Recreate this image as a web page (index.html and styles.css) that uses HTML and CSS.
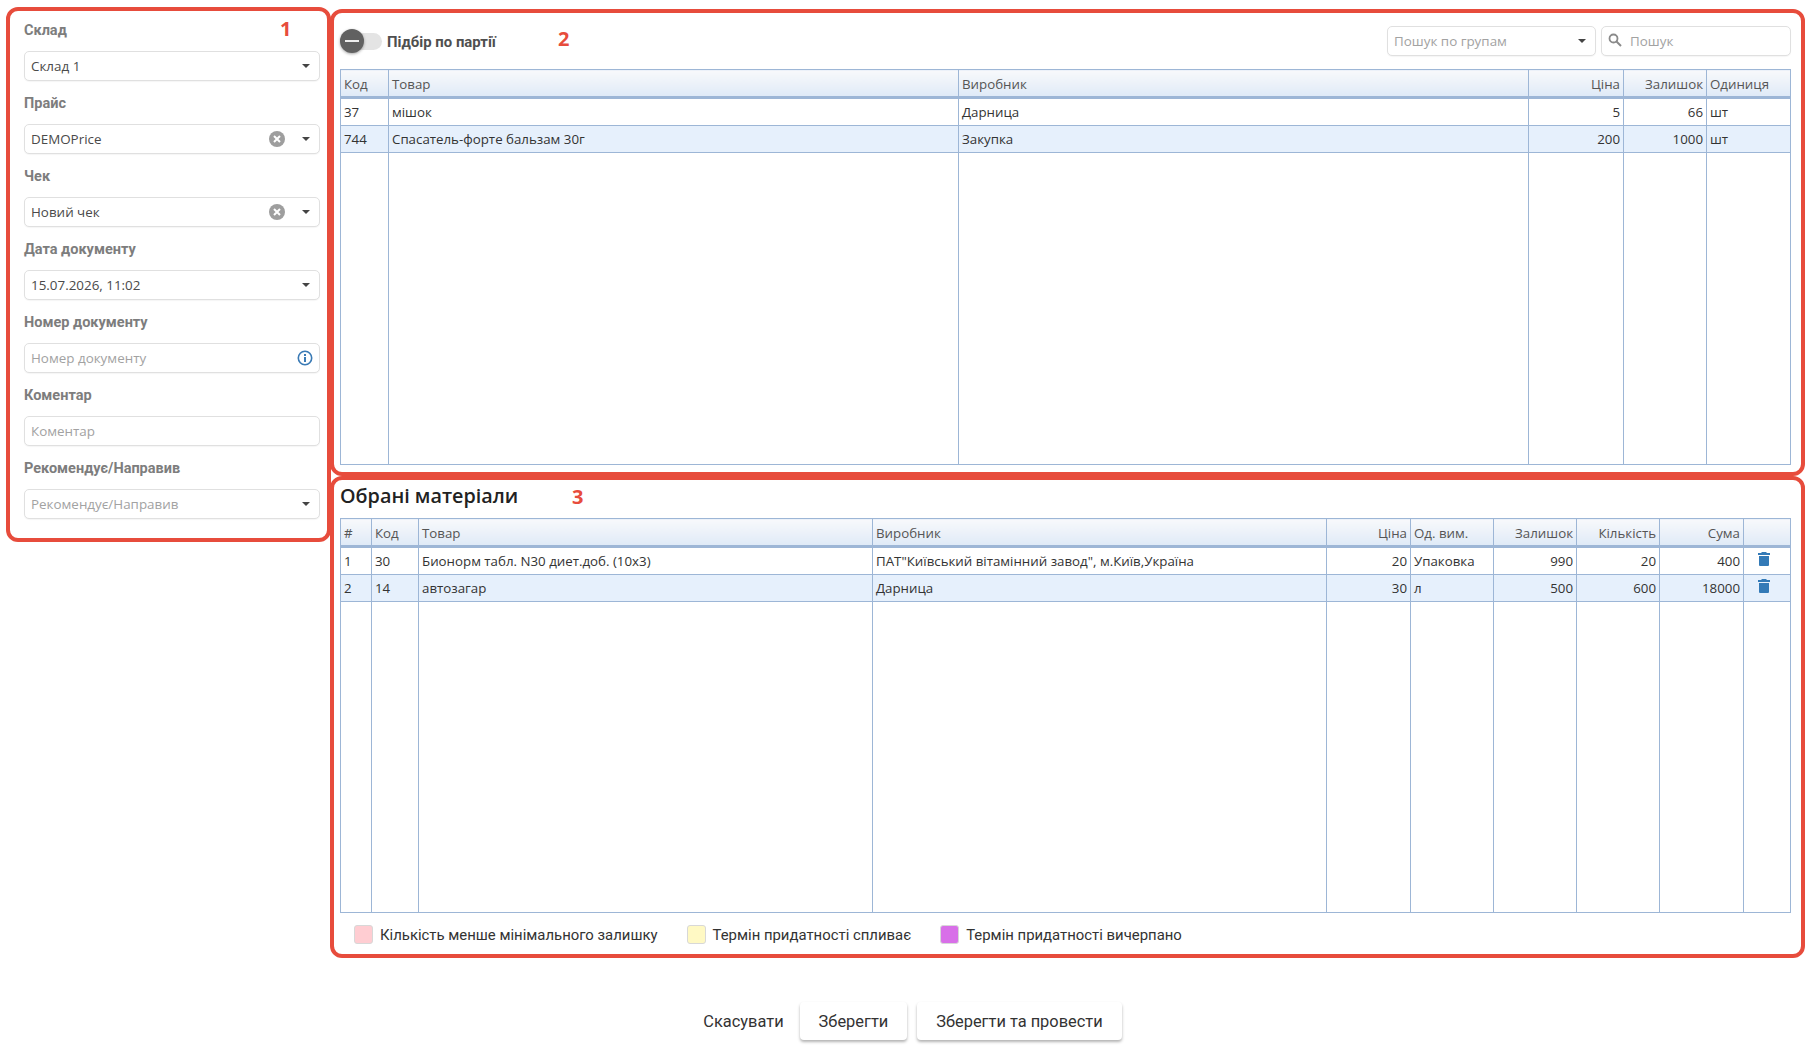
FILE: index.html
```html
<!DOCTYPE html>
<html lang="uk">
<head>
  <meta charset="UTF-8" />
  <title>Підбір матеріалів</title>
  <link rel="stylesheet" href="styles.css">
</head>
<body>
  <svg class="sprite" width="0" height="0">
    <symbol id="caret" viewBox="0 0 10 5"><path d="M0 0h10L5 5z"/></symbol>
    <symbol id="clear" viewBox="0 0 16 16"><circle cx="8" cy="8" r="8" fill="#9e9e9e"/><path d="M5 5l6 6M11 5l-6 6" stroke="#fff" stroke-width="2"/></symbol>
    <symbol id="info" viewBox="0 0 16 16"><circle cx="8" cy="8" r="6.7" fill="none" stroke="#3a7ab5" stroke-width="1.6"/><rect x="7" y="7" width="2" height="5" fill="#3a7ab5"/><rect x="7" y="4" width="2" height="2" fill="#3a7ab5"/></symbol>
    <symbol id="trash" viewBox="0 0 12 14"><path d="M4 0h4l1 1h3v2H0V1h3zM1 4h10v9a1 1 0 0 1-1 1H2a1 1 0 0 1-1-1z" fill="#337ab7"/></symbol>
  </svg>

  <div class="layout">
    <aside class="panel side">
      <span class="mark mark-1">1</span>
      <div class="field">
        <label>Склад</label>
        <div class="input"><span class="val">Склад 1</span><svg class="caret"><use href="#caret"/></svg></div>
      </div>
      <div class="field">
        <label>Прайс</label>
        <div class="input"><span class="val">DEMOPrice</span><svg class="clear"><use href="#clear"/></svg><svg class="caret"><use href="#caret"/></svg></div>
      </div>
      <div class="field">
        <label>Чек</label>
        <div class="input"><span class="val">Новий чек</span><svg class="clear"><use href="#clear"/></svg><svg class="caret"><use href="#caret"/></svg></div>
      </div>
      <div class="field">
        <label>Дата документу</label>
        <div class="input"><span class="val">15.07.2026, 11:02</span><svg class="caret"><use href="#caret"/></svg></div>
      </div>
      <div class="field">
        <label>Номер документу</label>
        <div class="input"><span class="val hint">Номер документу</span><svg class="info"><use href="#info"/></svg></div>
      </div>
      <div class="field">
        <label>Коментар</label>
        <div class="input"><span class="val hint">Коментар</span></div>
      </div>
      <div class="field">
        <label>Рекомендує/Направив</label>
        <div class="input"><span class="val hint">Рекомендує/Направив</span><svg class="caret"><use href="#caret"/></svg></div>
      </div>
    </aside>

    <main class="content">
      <section class="panel goods">
        <span class="mark mark-2">2</span>
        <div class="toolbar">
          <div class="toggle"><span class="track"></span><span class="thumb"></span></div>
          <span class="toggle-label">Підбір по партії</span>
          <div class="input group-search"><span class="val hint">Пошук по групам</span><svg class="caret"><use href="#caret"/></svg></div>
          <div class="input text-search">
            <svg class="lens" viewBox="0 0 14 14"><circle cx="5.5" cy="5.5" r="4" fill="none" stroke="#8a8a8a" stroke-width="1.8"/><path d="M8.5 8.5l4.5 4.5" stroke="#8a8a8a" stroke-width="2"/></svg>
            <span class="val hint">Пошук</span>
          </div>
        </div>
        <table class="grid grid-goods">
          <colgroup><col class="w48"><col class="w570"><col class="w570"><col class="w95"><col class="w83"><col class="w84"></colgroup>
          <thead>
            <tr><th>Код</th><th>Товар</th><th>Виробник</th><th class="num">Ціна</th><th class="num">Залишок</th><th>Одиниця</th></tr>
          </thead>
          <tbody>
            <tr><td>37</td><td>мішок</td><td>Дарница</td><td class="num">5</td><td class="num">66</td><td>шт</td></tr>
            <tr class="alt"><td>744</td><td>Спасатель-форте бальзам 30г</td><td>Закупка</td><td class="num">200</td><td class="num">1000</td><td>шт</td></tr>
            <tr class="filler"><td></td><td></td><td></td><td></td><td></td><td></td></tr>
          </tbody>
        </table>
      </section>

      <section class="panel picked">
        <span class="mark mark-3">3</span>
        <h2>Обрані матеріали</h2>
        <table class="grid grid-picked">
          <colgroup><col class="w31"><col class="w47"><col class="w454"><col class="w454"><col class="w84"><col class="w83"><col class="w83"><col class="w83"><col class="w84"><col class="w47"></colgroup>
          <thead>
            <tr><th>#</th><th>Код</th><th>Товар</th><th>Виробник</th><th class="num">Ціна</th><th>Од. вим.</th><th class="num">Залишок</th><th class="num">Кількість</th><th class="num">Сума</th><th></th></tr>
          </thead>
          <tbody>
            <tr><td>1</td><td>30</td><td>Бионорм табл. N30 диет.доб. (10х3)</td><td>ПАТ"Київський вітамінний завод", м.Київ,Україна</td><td class="num">20</td><td>Упаковка</td><td class="num">990</td><td class="num">20</td><td class="num">400</td><td class="act"><svg class="trash"><use href="#trash"/></svg></td></tr>
            <tr class="alt"><td>2</td><td>14</td><td>автозагар</td><td>Дарница</td><td class="num">30</td><td>л</td><td class="num">500</td><td class="num">600</td><td class="num">18000</td><td class="act"><svg class="trash"><use href="#trash"/></svg></td></tr>
            <tr class="filler"><td></td><td></td><td></td><td></td><td></td><td></td><td></td><td></td><td></td><td></td></tr>
          </tbody>
        </table>
        <div class="legend">
          <span class="swatch low"></span><span class="legend-text">Кількість менше мінімального залишку</span>
          <span class="swatch soon"></span><span class="legend-text">Термін придатності спливає</span>
          <span class="swatch expired"></span><span class="legend-text">Термін придатності вичерпано</span>
        </div>
      </section>
    </main>
  </div>

  <div class="footer">
    <button class="btn flat">Скасувати</button>
    <button class="btn">Зберегти</button>
    <button class="btn">Зберегти та провести</button>
  </div>
</body>
</html>
```

FILE: styles.css
```css
html, body {
  margin: 0;
  background: #fff;
}

body {
  height: 1049px;
  overflow: hidden;
  font-family: 'Open Sans', sans-serif;
  font-size: 13px;
  color: #333;
}

.sprite {
  display: block;
  height: 0;
}

.layout {
  display: flex;
  align-items: flex-start;
  padding: 7px 9px 0 6px;
}

.panel {
  position: relative;
  box-sizing: border-box;
  border: 4px solid #e74c3c;
  border-radius: 12px;
  background: #fff;
}

.mark {
  position: absolute;
  color: #e74c3c;
  font-family: 'Open Sans', sans-serif;
  font-size: 20px;
  font-weight: 700;
  line-height: 24px;
}

.mark-1 { left: 270px; top: 6px; }
.mark-2 { left: 224px; top: 14px; }
.mark-3 { left: 238px; top: 5px; }

.side {
  width: 325px;
  flex: none;
  margin-right: -1px;
  padding: 10px 7px 19px 14px;
}

.field {
  margin-bottom: 13px;
}

.field:last-child {
  margin-bottom: 0;
}

label {
  display: block;
  height: 20px;
  margin-bottom: 10px;
  font-family: Roboto, sans-serif;
  font-size: 14.5px;
  font-weight: 700;
  line-height: 20px;
  color: #7d7d7d;
}

.input {
  display: flex;
  align-items: center;
  box-sizing: border-box;
  height: 30px;
  padding: 0 9px 0 6px;
  border: 1px solid #e0e0e0;
  border-radius: 5px;
  background: #fff;
  box-shadow: 0 1px 1px rgba(0,0,0,0.04);
}

.val {
  flex: 1;
  font-size: 13.4px;
  color: #4a4a4a;
  white-space: nowrap;
}

.val.hint {
  color: #a2a2a2;
}

.caret {
  width: 8px;
  height: 4px;
  margin-left: 17px;
  fill: #444;
}

.clear {
  width: 16px;
  height: 16px;
}

.info {
  width: 16px;
  height: 16px;
  margin-right: -3px;
}

.content {
  flex: 1;
  display: flex;
  flex-direction: column;
  margin-top: 2px;
}

.goods {
  padding: 13px 10px 7px 6px;
}

.toolbar {
  display: flex;
  align-items: center;
  height: 30px;
  margin-bottom: 13px;
}

.toggle {
  position: relative;
  width: 42px;
  height: 24px;
  flex: none;
}

.track {
  position: absolute;
  left: 0;
  top: 4px;
  width: 42px;
  height: 17px;
  border-radius: 9px;
  background: #e4e4e4;
}

.thumb {
  position: absolute;
  left: 0;
  top: 0;
  width: 24px;
  height: 24px;
  border-radius: 50%;
  background: #616161;
  box-shadow: 0 1px 3px rgba(0,0,0,0.35);
}

.thumb::after {
  content: "";
  position: absolute;
  left: 5px;
  top: 11px;
  width: 14px;
  height: 2px;
  background: #eee;
}

.toggle-label {
  flex: 1;
  margin-left: 5px;
  padding-top: 2px;
  font-family: Roboto, sans-serif;
  font-size: 14.9px;
  font-weight: 700;
  color: #4f4f4f;
}

.group-search {
  width: 209px;
  flex: none;
  margin-right: 5px;
}

.text-search {
  width: 190px;
  flex: none;
}

.lens {
  width: 14px;
  height: 14px;
  margin: -3px 8px 0 0;
  flex: none;
}

.grid {
  width: 1450px;
  table-layout: fixed;
  border-collapse: collapse;
  font-size: 13.3px;
}

.grid-goods { height: 396px; }
.grid-picked { height: 395px; }

.grid th, .grid td {
  padding: 0 3px;
  border: 1px solid #9db6d6;
  text-align: left;
  white-space: nowrap;
  overflow: hidden;
}

.grid th {
  height: 25px;
  padding-top: 1px;
  border-bottom: 3px solid #9db6d6;
  background: linear-gradient(to bottom, #f8f9fb, #dfeaf7);
  font-weight: 400;
  color: #555;
}

.grid td {
  height: 27.5px;
  padding-top: 1px;
  box-sizing: border-box;
  color: #333;
}

.grid .num {
  text-align: right;
}

.grid .alt td {
  background: #e6f0fc;
}

.grid .filler td {
  height: auto;
}

.grid .act {
  padding: 0 0 0 14px;
}

.trash {
  display: block;
  width: 12px;
  height: 14px;
  margin-bottom: 4px;
}

.w31 { width: 31px; }
.w47 { width: 47px; }
.w48 { width: 48px; }
.w83 { width: 83px; }
.w84 { width: 84px; }
.w95 { width: 95px; }
.w454 { width: 454px; }
.w570 { width: 570px; }

.picked {
  padding: 0 10px 10px 6px;
}

h2 {
  height: 38px;
  margin: 0;
  font-size: 19.8px;
  font-weight: 600;
  line-height: 32px;
  color: #222;
}

.legend {
  display: flex;
  align-items: center;
  height: 19px;
  margin-top: 12px;
  padding-left: 14px;
}

.swatch {
  box-sizing: border-box;
  width: 19px;
  height: 19px;
  border: 1px solid #d8d8d8;
  border-radius: 3px;
}

.swatch.low { background: #ffcdd2; }
.swatch.soon { background: #fff9c4; }
.swatch.expired { background: #d86fe8; }

.legend-text {
  margin: 0 29px 0 7px;
  font-family: Roboto, sans-serif;
  font-size: 14.9px;
  color: #333;
}

.footer {
  display: flex;
  justify-content: center;
  align-items: center;
  margin: 44px 0 0 -3px;
}

.btn {
  height: 38px;
  margin-right: 10px;
  padding: 0 19px;
  border: none;
  border-radius: 4px;
  background: #fff;
  box-shadow: 0 2px 3px rgba(0,0,0,0.3);
  font-family: Roboto, sans-serif;
  font-size: 16.4px;
  color: #333;
}

.btn:last-child {
  margin-right: 0;
}

.btn.flat {
  margin-right: 0;
  padding: 0 16px;
  box-shadow: none;
  background: none;
}
```
